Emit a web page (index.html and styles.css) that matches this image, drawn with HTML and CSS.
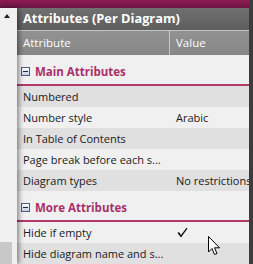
FILE: index.html
```html
<!DOCTYPE html>
<html lang="en">
<head>
  <meta charset="UTF-8">
  <title>Attributes</title>
  <link rel="stylesheet" href="styles.css">
</head>
<body>
  <div class="topbar"></div>
  <div class="app">
    <div class="sidebar">
      <div class="arrow"></div>
      <div class="stub"></div>
    </div>
    <div class="panel">
      <div class="title">Attributes (Per Diagram)</div>
      <div class="cols">
        <div class="col">Attribute</div>
        <div class="col">Value</div>
      </div>

      <div class="section">
        <span class="toggle"></span>Main Attributes
      </div>
      <div class="row dark"><div class="name">Numbered</div><div class="val"></div></div>
      <div class="row"><div class="name">Number style</div><div class="val">Arabic</div></div>
      <div class="row dark"><div class="name">In Table of Contents</div><div class="val"></div></div>
      <div class="row"><div class="name">Page break before each s...</div><div class="val"></div></div>
      <div class="row dark"><div class="name">Diagram types</div><div class="val">No restrictions</div></div>

      <div class="section">
        <span class="toggle"></span>More Attributes
      </div>
      <div class="row"><div class="name">Hide if empty</div>
        <div class="val">
          <svg class="check" width="11" height="11" viewBox="0 0 11 11"><path d="M0.5 6 L2 5 L4 8 L9.5 0.8 L10.5 1.6 L4 10.5 Z" fill="#111"/></svg>
        </div>
      </div>
      <div class="row dark"><div class="name">Hide diagram name and s...</div><div class="val"></div></div>

      <svg class="cursor" width="13" height="20" viewBox="0 0 13 20">
        <path d="M0.5 0.5 L0.5 16 L4 12.5 L6.5 18.5 L9 17.5 L6.5 11.8 L11.5 11.8 Z" fill="#fff" stroke="#000" stroke-width="1"/>
      </svg>
    </div>
    <div class="scroll"></div>
  </div>
</body>
</html>
```

FILE: styles.css
```css
* {
  box-sizing: border-box;
  margin: 0;
  padding: 0;
}

body {
  width: 253px;
  height: 264px;
  overflow: hidden;
  background: #f0f0f0;
  font-family: "Open Sans", "Liberation Sans", sans-serif;
  font-size: 11px;
  color: #1a1a1a;
}

.topbar {
  height: 8px;
  background: linear-gradient(#8e1c55, #6c1542);
  margin-right: 4px;
}

.app {
  display: flex;
  height: 256px;
}

.sidebar {
  position: relative;
  z-index: 1;
  flex-shrink: 0;
  width: 17px;
  background: #f0f0f0;
  box-shadow: 2px 0 5px rgba(0, 0, 0, 0.45);
  display: flex;
  flex-direction: column;
  justify-content: space-between;
}

.arrow {
  width: 0;
  height: 0;
  margin: 6px 0 0 4px;
  border-left: 3px solid transparent;
  border-right: 3px solid transparent;
  border-bottom: 4px solid #222;
}

.stub {
  width: 12px;
  height: 22px;
  background: #c8c8c8;
}

.panel {
  position: relative;
  flex: 1;
  min-width: 0;
  overflow: hidden;
  background: #f0f0f0;
}

.scroll {
  flex-shrink: 0;
  width: 4px;
  margin-top: -8px;
  background: #3c3c3c;
}

.title {
  height: 22px;
  line-height: 21px;
  padding-left: 6px;
  background: linear-gradient(#707070, #5e5e5e);
  color: #fff;
  font-weight: bold;
  font-size: 12.8px;
  white-space: nowrap;
}

.cols {
  display: flex;
  height: 25px;
  border-top: 1px solid #c4c4c4;
  background: linear-gradient(#929292, #868686);
  color: #fff;
  font-size: 11.5px;
}

.col {
  line-height: 23px;
  padding-left: 6px;
}

.col:first-child {
  flex-shrink: 0;
  width: 153px;
  border-right: 1px solid #c8c8c8;
}

.section {
  display: flex;
  align-items: center;
  height: 31px;
  padding: 3px 0 0 4px;
  border-bottom: 2px solid #b03a6c;
  color: #a8306a;
  font-weight: bold;
  font-size: 11.5px;
  background: #f0f0f0;
}

.toggle {
  position: relative;
  width: 9px;
  height: 9px;
  margin-right: 5px;
  border: 1px solid #4a5a78;
  background: linear-gradient(#fdfdfd, #c8d0dc);
}

.toggle::after {
  content: "";
  position: absolute;
  left: 1px;
  top: 3px;
  width: 5px;
  height: 1px;
  background: #1a2a44;
}

.row {
  display: flex;
  height: 21px;
  line-height: 21px;
  background: #f0f0f0;
  white-space: nowrap;
}

.row.dark {
  background: #e0e0e0;
}

.name {
  flex-shrink: 0;
  width: 153px;
  padding-left: 6px;
  overflow: hidden;
}

.val {
  flex: 1;
  padding-left: 6px;
  overflow: hidden;
}

.check {
  vertical-align: -1px;
  margin-left: 1px;
}

.cursor {
  position: absolute;
  left: 191px;
  top: 228px;
}
```
